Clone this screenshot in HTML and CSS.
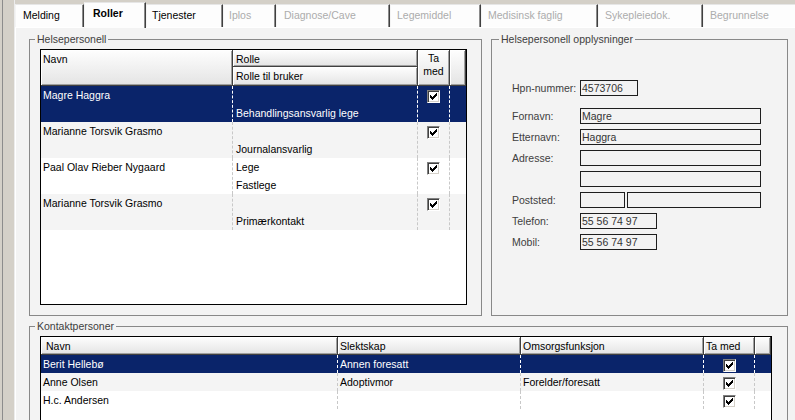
FILE: index.html
```html
<!DOCTYPE html>
<html lang="no">
<head>
<meta charset="utf-8">
<title>Roller</title>
<link rel="stylesheet" href="styles.css">
</head>
<body>
<div class="window">
  <div class="frame-left"></div>
  <div class="main">
    <div class="tabs">
      <div class="tab t-melding">Melding</div>
      <div class="tab active t-roller">Roller</div>
      <div class="tab t-tjenester">Tjenester</div>
      <div class="tab disabled t-iplos">Iplos</div>
      <div class="tab disabled t-diagnose">Diagnose/Cave</div>
      <div class="tab disabled t-legemiddel">Legemiddel</div>
      <div class="tab disabled t-medisinsk">Medisinsk faglig</div>
      <div class="tab disabled t-sykepleie">Sykepleiedok.</div>
      <div class="tab disabled t-begrunnelse">Begrunnelse</div>
    </div>
    <div class="page">
      <div class="top-row">
        <fieldset class="group g-helse">
          <legend>Helsepersonell</legend>
          <div class="list helse-list">
            <div class="hdr">
              <div class="hc hc-navn">Navn</div>
              <div class="hc hc-rolle">Rolle</div>
              <div class="hc hc-tamed">Ta<br>med</div>
              <div class="hc hc-blank"></div>
              <div class="hc hc-rolle2">Rolle til bruker</div>
            </div>
            <div class="row sel">
              <div class="c"><div class="ln">Magre Haggra</div></div>
              <div class="c c-rolle"><div class="ln"></div><div class="ln">Behandlingsansvarlig lege</div></div>
              <div class="c chk"><span class="cb"><svg width="11" height="11" viewBox="1 1 11 11"><path d="M3 5H4V6H5V7H6V6H7V5H8V4H9V3H10V6H9V7H8V8H7V9H6V10H5V9H4V8H3Z" fill="#000"/></svg></span></div>
              <div class="c last"></div>
            </div>
            <div class="row alt">
              <div class="c"><div class="ln">Marianne Torsvik Grasmo</div></div>
              <div class="c c-rolle"><div class="ln"></div><div class="ln">Journalansvarlig</div></div>
              <div class="c chk"><span class="cb"><svg width="11" height="11" viewBox="1 1 11 11"><path d="M3 5H4V6H5V7H6V6H7V5H8V4H9V3H10V6H9V7H8V8H7V9H6V10H5V9H4V8H3Z" fill="#000"/></svg></span></div>
              <div class="c last"></div>
            </div>
            <div class="row">
              <div class="c"><div class="ln">Paal Olav Rieber Nygaard</div></div>
              <div class="c c-rolle"><div class="ln">Lege</div><div class="ln">Fastlege</div></div>
              <div class="c chk"><span class="cb"><svg width="11" height="11" viewBox="1 1 11 11"><path d="M3 5H4V6H5V7H6V6H7V5H8V4H9V3H10V6H9V7H8V8H7V9H6V10H5V9H4V8H3Z" fill="#000"/></svg></span></div>
              <div class="c last"></div>
            </div>
            <div class="row alt">
              <div class="c"><div class="ln">Marianne Torsvik Grasmo</div></div>
              <div class="c c-rolle"><div class="ln"></div><div class="ln">Primærkontakt</div></div>
              <div class="c chk"><span class="cb"><svg width="11" height="11" viewBox="1 1 11 11"><path d="M3 5H4V6H5V7H6V6H7V5H8V4H9V3H10V6H9V7H8V8H7V9H6V10H5V9H4V8H3Z" fill="#000"/></svg></span></div>
              <div class="c last"></div>
            </div>
          </div>
        </fieldset>
        <fieldset class="group g-info">
          <legend>Helsepersonell opplysninger</legend>
          <div class="fields">
            <div class="frow hpn"><span class="lbl">Hpn-nummer:</span><span class="inp w-hpn">4573706</span></div>
            <div class="frow"><span class="lbl">Fornavn:</span><span class="inp w-wide">Magre</span></div>
            <div class="frow"><span class="lbl">Etternavn:</span><span class="inp w-wide">Haggra</span></div>
            <div class="frow"><span class="lbl">Adresse:</span><span class="inp w-wide"></span></div>
            <div class="frow"><span class="lbl"></span><span class="inp w-wide"></span></div>
            <div class="frow"><span class="lbl">Poststed:</span><span class="inp w-post1"></span><span class="inp w-post2"></span></div>
            <div class="frow"><span class="lbl">Telefon:</span><span class="inp w-tel">55 56 74 97</span></div>
            <div class="frow"><span class="lbl">Mobil:</span><span class="inp w-tel">55 56 74 97</span></div>
          </div>
        </fieldset>
      </div>
      <fieldset class="group g-kontakt">
        <legend>Kontaktpersoner</legend>
        <div class="list kontakt-list">
          <div class="hdr">
            <div class="hc hc-first">Navn</div>
            <div class="hc">Slektskap</div>
            <div class="hc">Omsorgsfunksjon</div>
            <div class="hc">Ta med</div>
            <div class="hc"></div>
          </div>
          <div class="row sel">
            <div class="c">Berit Hellebø</div>
            <div class="c">Annen foresatt</div>
            <div class="c"></div>
            <div class="c chk"><span class="cb"><svg width="11" height="11" viewBox="1 1 11 11"><path d="M3 5H4V6H5V7H6V6H7V5H8V4H9V3H10V6H9V7H8V8H7V9H6V10H5V9H4V8H3Z" fill="#000"/></svg></span></div>
            <div class="c last"></div>
          </div>
          <div class="row alt">
            <div class="c">Anne Olsen</div>
            <div class="c">Adoptivmor</div>
            <div class="c">Forelder/foresatt</div>
            <div class="c chk"><span class="cb"><svg width="11" height="11" viewBox="1 1 11 11"><path d="M3 5H4V6H5V7H6V6H7V5H8V4H9V3H10V6H9V7H8V8H7V9H6V10H5V9H4V8H3Z" fill="#000"/></svg></span></div>
            <div class="c last"></div>
          </div>
          <div class="row">
            <div class="c">H.c. Andersen</div>
            <div class="c"></div>
            <div class="c"></div>
            <div class="c chk"><span class="cb"><svg width="11" height="11" viewBox="1 1 11 11"><path d="M3 5H4V6H5V7H6V6H7V5H8V4H9V3H10V6H9V7H8V8H7V9H6V10H5V9H4V8H3Z" fill="#000"/></svg></span></div>
            <div class="c last"></div>
          </div>
        </div>
      </fieldset>
    </div>
  </div>
</div>
</body>
</html>
```
FILE: styles.css
```css
* { box-sizing: border-box; }
html, body { margin: 0; padding: 0; height: 420px; overflow: hidden; }
body {
  background: #d4d0c8;
  font-family: "Liberation Sans", Arial, sans-serif;
  font-size: 10.5px;
  color: #000;
}
.window { display: flex; width: 795px; height: 420px; }
.frame-left {
  width: 15px; flex: none;
  background: linear-gradient(to right, #d4d0c8 0 2px, #8c8c8c 2px 3px, #d4d0c8 3px 14px, #ececec 14px 15px);
}
.main { flex: 1; display: flex; flex-direction: column; min-width: 0; overflow: hidden; }

/* tabs */
.tabs { display: flex; height: 27px; padding-top: 4px; align-items: flex-start; flex: none; }
.tab {
  flex: none; height: 23px;
  background: #fdfdfd;
  border-top: 1px solid #e6e6e6;
  border-left: 1px solid #f4f4f4;
  border-right: 1px solid #404040;
  box-shadow: inset -1px 0 #8c8c8c;
  padding-left: 7px; line-height: 21px; white-space: nowrap; overflow: hidden;
}
.tab.disabled { color: #acacac; }
.tab.active { font-weight: bold; height: 26px; margin-top: -2px; line-height: 20px; position: relative; z-index: 1; padding-left: 8px; }
.t-melding { width: 69px; }
.t-roller { width: 62px; }
.t-tjenester { width: 77px; padding-left: 5px; }
.t-iplos { width: 53px; padding-left: 5px; }
.t-diagnose { width: 114px; }
.t-legemiddel { width: 91px; padding-left: 6px; }
.t-medisinsk { width: 117px; padding-left: 6px; }
.t-sykepleie { width: 105px; padding-left: 6px; }
.t-begrunnelse { width: 100px; padding-left: 6px; }

/* page */
.page {
  flex: 1; background: #f3f3f3;
  border-top: 1px solid #fff; border-left: 1px solid #fff;
  padding: 5px 7px 0 13px;
  display: flex; flex-direction: column; gap: 4px;
}
.top-row { display: flex; gap: 9px; }
fieldset.group { margin: 0; border: 1px solid #888; padding: 4px 0 10px 5px; min-width: 0; }
fieldset.group legend { padding: 0 2px; line-height: 12px; color: #404040; font-size: 10.5px; }
.g-helse { width: 453px; flex: none; }
.g-info { flex: 1; }
.g-info legend { margin-left: 2px; }
.g-kontakt { padding-bottom: 0; }

/* lists */
.list { background: #fff; border: 1px solid #000; display: flex; flex-direction: column; overflow: hidden; }
.helse-list { width: 427px; height: 256px; margin-left: 5px; }
.kontakt-list { width: 732px; height: 100px; margin-left: 5px; }
.hdr { display: grid; flex: none; }
.row { display: grid; flex: none; }
.helse-list .hdr, .helse-list .row { grid-template-columns: 192px 185px 32px 16px; }
.helse-list .hdr { grid-template-rows: 17px 19px; }
.kontakt-list .hdr, .kontakt-list .row { grid-template-columns: 297px 183px 183px 51px 16px; }
.kontakt-list .hdr { grid-template-rows: 18px; }
.hc {
  background: linear-gradient(#fefefe, #e4e4e4);
  border-right: 1px solid #404040; border-bottom: 1px solid #404040;
  box-shadow: inset 1px 1px #fff, inset -1px -1px #a0a0a0;
  padding: 1px 0 0 2px; line-height: 16px; white-space: nowrap; overflow: hidden;
}
.hc-navn { grid-row: 1 / 3; grid-column: 1; }
.hc-rolle { grid-row: 1; grid-column: 2; padding-left: 3px; }
.hc-rolle2 { grid-row: 2; grid-column: 2; padding-left: 3px; }
.hc-tamed { grid-row: 1 / 3; grid-column: 3; text-align: center; padding: 2px 0 0; line-height: 13px; }
.hc-blank { grid-row: 1 / 3; grid-column: 4; }
.hc-first { padding-left: 5px; }

.helse-list .row { height: 36px; }
.kontakt-list .row { height: 18px; }
.row.alt { background: #f4f4f4; }
.row.sel { background: #0a246a; color: #fff; }
.c { border-right: 1px dashed #c8c8c8; padding-left: 2px; line-height: 18px; white-space: nowrap; overflow: hidden; }
.c-rolle { padding-left: 3px; }
.ln { height: 18px; line-height: 18px; }
.row.sel .c { border-right-color: #fff; }
.c.last { border-right: none; }
.c.chk { display: flex; justify-content: center; align-items: flex-start; padding: 4px 0 0; }
.cb {
  display: block; width: 13px; height: 13px; background: #fff;
  border-top: 1px solid #808080; border-left: 1px solid #808080;
  border-right: 1px solid #fff; border-bottom: 1px solid #fff;
  box-shadow: inset 1px 1px #404040, inset -1px -1px #d4d0c8;
}
.cb svg { display: block; }

/* info fields */
.fields { margin: 31px 0 0 15px; display: flex; flex-direction: column; gap: 5px; }
.frow { display: flex; align-items: center; height: 16px; }
.frow.hpn { margin-bottom: 7px; }
.lbl { width: 68px; flex: none; color: #404040; }
.inp {
  display: block; height: 16px; flex: none;
  border: 1px solid #1e1e1e; background: #f3f3f3;
  padding-left: 1px; line-height: 14px; color: #333; white-space: nowrap;
}
.w-hpn { width: 58px; }
.w-wide { width: 181px; }
.w-post1 { width: 45px; margin-right: 2px; }
.w-post2 { width: 134px; }
.w-tel { width: 77px; }
```
